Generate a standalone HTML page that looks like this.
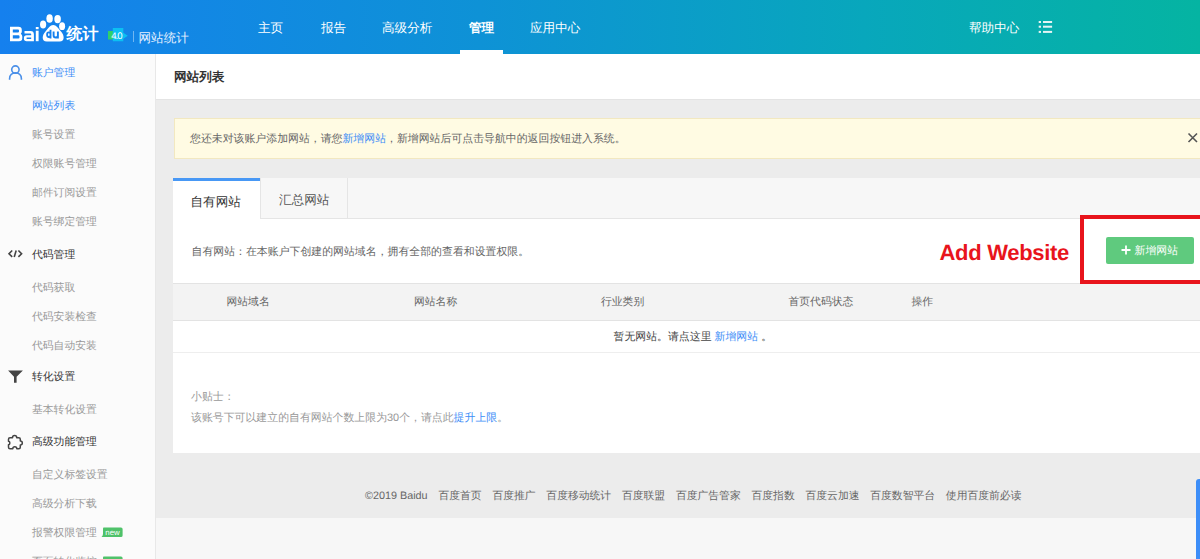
<!DOCTYPE html>
<html><head><meta charset="utf-8">
<style>
*{margin:0;padding:0;box-sizing:border-box}
html,body{width:1200px;height:559px;overflow:hidden;background:#f7f7f7}
body{font-family:"Liberation Sans",sans-serif;text-rendering:geometricPrecision;position:relative;font-size:10.9px;color:#666}
.a{position:absolute;white-space:nowrap;line-height:1}
#hd{position:absolute;left:0;top:0;width:1200px;height:54px;background:linear-gradient(to right,#1580ee 0%,#0e92d6 40%,#08a7bc 72%,#05b4a2 100%)}
.nav{position:absolute;top:22px;font-size:12.6px;color:#fff;line-height:1;white-space:nowrap}
#sb{position:absolute;left:0;top:54px;width:156px;height:505px;background:#fbfbfb;border-right:1px solid #e8e8e8}
.si{position:absolute;left:32px;font-size:10.8px;color:#999;line-height:1;white-space:nowrap}
.sh{position:absolute;left:32px;font-size:10.8px;color:#333;line-height:1;white-space:nowrap}
.ic{position:absolute}
#tt{position:absolute;left:156px;top:54px;width:1044px;height:46px;background:#fff;border-bottom:1px solid #e4e4e4}
#ct{position:absolute;left:156px;top:100px;width:1044px;height:418px;background:#ececec}
#al{position:absolute;left:174px;top:118px;width:1040px;height:41px;background:#fffbe3;border:1px solid #f2e8c0}
#pn{position:absolute;left:173px;top:178px;width:1040px;height:275px;background:#fff}
#tb{position:absolute;left:0;top:0;width:1040px;height:41px;background:#f7f7f7;border-bottom:1px solid #e5e5e5}
.lk{color:#3e8ef7}
.th{position:absolute;top:13px;font-size:10.8px;color:#666;line-height:1;white-space:nowrap}
.ft{margin-right:10.8px}
</style></head><body>
<div id="hd">
  <svg class="ic" style="left:0;top:0" width="140" height="54" viewBox="0 0 140 54">
    <g fill="#fff" fill-rule="evenodd">
      <path d="M10,26.7 H18.5 Q21.8,26.7 21.8,30 V31.5 Q21.8,33 20.8,33.8 Q22.3,34.8 22.3,36.5 V38 Q22.3,41.2 19,41.2 H10 Z M12.8,29.4 H18 Q19,29.4 19,30.4 V31.4 Q19,32.5 18,32.5 H12.8 Z M12.8,35.2 H18.4 Q19.5,35.2 19.5,36.2 V37.5 Q19.5,38.5 18.4,38.5 H12.8 Z"/>
      <path d="M24.5,31 H30.5 Q33.9,31 33.9,34.4 V41.2 H26.6 Q23.9,41.2 23.9,38.5 V38 Q23.9,35.3 26.6,35.3 H31.2 V34.4 Q31.2,33.6 30.5,33.6 H24.5 Z M26.6,37.6 H31.2 V38.9 H26.6 Z"/>
      <rect x="35.8" y="27" width="2.8" height="2.2"/>
      <rect x="35.8" y="30.7" width="2.8" height="10.5"/>
      <ellipse cx="43.1" cy="24.6" rx="3.1" ry="4"/>
      <ellipse cx="49.6" cy="18.5" rx="3.2" ry="4.3"/>
      <ellipse cx="57.6" cy="19.1" rx="3.3" ry="4.2"/>
      <ellipse cx="62.1" cy="26.2" rx="3" ry="3.9"/>
      <path d="M53.2,25.1 C50,25.1 48.5,28.2 45.5,31.5 C42,35 41.2,41.5 46.8,41.5 L59.6,41.5 C65.2,41.5 64.4,35 61,31.5 C58,28.2 56.4,25.1 53.2,25.1 Z"/>
    </g>
    <g fill="none" stroke="#1580ee" stroke-width="1.9">
      <path d="M50.5,29.8 V38.4 M50.5,34.4 C50.5,31.7 47.1,31.7 47.1,34.7 C47.1,37.7 50.5,37.7 50.5,35"/>
      <path d="M53.6,31.4 V35.6 C53.6,38.2 57.9,38.2 57.9,35.6 V31.4 M57.9,35.5 V38.4"/>
    </g>
    <rect x="108" y="31" width="5" height="8.5" fill="#2fd06a"/>
    <path d="M112.8,27.9 H123.3 V32.8 L127.8,35.8 L123.3,38.8 V41.3 H112.8 Z" fill="#0cc0f2"/>
    <text x="111.2" y="39" font-family="Liberation Sans" font-size="9.5" fill="#fff" letter-spacing="-0.9">4.0</text>
    <rect x="133" y="31" width="1" height="11" fill="rgba(255,255,255,0.4)"/>
  </svg>
  <div class="a" style="left:66.5px;top:26.5px;font-size:16px;color:#fff;font-weight:bold">统计</div>
  <div class="a" style="left:138.5px;top:32px;font-size:12.6px;color:#e6f0ff">网站统计</div>
  <div class="nav" style="left:258px">主页</div>
  <div class="nav" style="left:321px">报告</div>
  <div class="nav" style="left:382px">高级分析</div>
  <div class="nav" style="left:469px;font-weight:bold">管理</div>
  <div class="nav" style="left:530px">应用中心</div>
  <div style="position:absolute;left:460px;top:50px;width:43px;height:4px;background:#fff"></div>
  <div class="nav" style="left:969px">帮助中心</div>
  <svg class="ic" style="left:1036px;top:18px" width="20" height="18" viewBox="1036 18 20 18">
    <g fill="#e6f4f4">
      <rect x="1038.7" y="21" width="2.3" height="2"/><rect x="1043" y="21" width="9.1" height="2"/>
      <rect x="1038.7" y="25.7" width="2.3" height="2"/><rect x="1043" y="25.7" width="9.1" height="2"/>
      <rect x="1038.7" y="30.9" width="2.3" height="2"/><rect x="1043" y="30.9" width="9.1" height="2"/>
    </g>
  </svg>
</div>
<div id="sb">
  <svg class="ic" style="left:0;top:0" width="30" height="505" viewBox="0 54 30 505">
    <g fill="none" stroke="#4a8fe8" stroke-width="1.6">
      <circle cx="15.4" cy="69.6" r="3.7"/>
      <path d="M9.6,79.7 V78.5 C9.6,75 12.2,72.9 15.5,72.9 C18.8,72.9 21.4,75 21.4,78.5 V79.7"/>
    </g>
    <g fill="none" stroke="#444" stroke-width="1.6">
      <path d="M12.2,250.5 L9,253.7 L12.2,256.9"/>
      <path d="M16.2,250.6 L14.2,257"/>
      <path d="M18.4,250.5 L21.6,253.7 L18.4,256.9"/>
    </g>
    <path d="M8.1,370.6 H22.9 L16.6,376.8 V382.7 H14 V376.8 Z" fill="#444"/>
    <path d="M10,437.7 H12.5 A2.1,2.1 0 0 1 16.7,437.7 H18.8 Q20.3,437.7 20.3,439.2 V441 A2,2 0 0 1 20.3,445 V447.3 Q20.3,448.8 18.8,448.8 H16.8 A2,2 0 0 0 12.8,448.8 H10 Q8.5,448.8 8.5,447.3 V444.8 A1.8,1.8 0 0 0 8.5,441.3 V439.2 Q8.5,437.7 10,437.7 Z" fill="none" stroke="#444" stroke-width="1.5" stroke-linejoin="round"/>
  </svg>
  <div class="si" style="top:13.5px;color:#3e8ef7">账户管理</div>
  <div class="si" style="top:46.5px;color:#3e8ef7">网站列表</div>
  <div class="si" style="top:75.5px">账号设置</div>
  <div class="si" style="top:104.5px">权限账号管理</div>
  <div class="si" style="top:133.5px">邮件订阅设置</div>
  <div class="si" style="top:162.5px">账号绑定管理</div>
  <div class="sh" style="top:196px">代码管理</div>
  <div class="si" style="top:228.5px">代码获取</div>
  <div class="si" style="top:257.5px">代码安装检查</div>
  <div class="si" style="top:286.5px">代码自动安装</div>
  <div class="sh" style="top:317.5px">转化设置</div>
  <div class="si" style="top:350.5px">基本转化设置</div>
  <div class="sh" style="top:383px">高级功能管理</div>
  <div class="si" style="top:416px">自定义标签设置</div>
  <div class="si" style="top:445px">高级分析下载</div>
  <div class="si" style="top:474px">报警权限管理</div>
  <div class="si" style="top:503px">页面转化监控</div>
  <svg class="ic" style="left:100px;top:472px" width="24" height="40" viewBox="100 526 24 40">
    <path d="M103.5,527.5 H121 Q122.6,527.5 122.6,529 V535.5 Q122.6,537 121,537 H101.5 Q102.8,536 103,534 V529 Q103,527.5 103.5,527.5 Z" fill="#4fc26a"/>
    <text x="105.3" y="535" font-family="Liberation Sans" font-size="7.8" fill="#fff">new</text>
    <path d="M103.5,556.5 H121 Q122.6,556.5 122.6,558 V566 H103 V558 Q103,556.5 103.5,556.5 Z" fill="#4fc26a"/>
  </svg>
</div>
<div id="tt"><div class="a" style="left:18px;top:17px;font-size:12.6px;font-weight:bold;color:#333">网站列表</div></div>
<div id="ct"></div>
<div id="al"><div class="a" style="left:15px;top:15px">您还未对该账户添加网站，请您<span class="lk">新增网站</span>，新增网站后可点击导航中的返回按钮进入系统。</div>
  <svg class="ic" style="left:1011.5px;top:12.5px" width="12" height="12" viewBox="0 0 12 12"><path d="M1.5,1.5 L10,10 M10,1.5 L1.5,10" stroke="#555" stroke-width="1.6"/></svg>
</div>
<div id="pn">
  <div id="tb">
    <div style="position:absolute;left:0;top:0;width:87px;height:41px;background:#fff;border-top:3px solid #4898f5"></div>
    <div style="position:absolute;left:87px;top:0;width:88px;height:40px;border-right:1px solid #e5e5e5;border-left:1px solid #e5e5e5"></div>
    <div class="a" style="left:17.5px;top:17.5px;font-size:12.6px;color:#333">自有网站</div>
    <div class="a" style="left:106px;top:15.5px;font-size:12.6px;color:#555">汇总网站</div>
  </div>
  <div class="a" style="left:18.5px;top:68.5px">自有网站：在本账户下创建的网站域名，拥有全部的查看和设置权限。</div>
  <div style="position:absolute;left:0;top:105px;width:1040px;height:38px;background:#f3f3f3;border-top:1px solid #e3e3e3;border-bottom:1px solid #e3e3e3">
    <div class="th" style="left:53.5px">网站域名</div>
    <div class="th" style="left:241px">网站名称</div>
    <div class="th" style="left:428px">行业类别</div>
    <div class="th" style="left:615.5px">首页代码状态</div>
    <div class="th" style="left:738.5px">操作</div>
  </div>
  <div style="position:absolute;left:0;top:143px;width:1040px;height:32px;border-bottom:1px solid #eee">
    <div class="a" style="left:440.5px;top:10.5px;color:#444">暂无网站。请点这里 <span class="lk">新增网站</span> 。</div>
  </div>
  <div class="a" style="left:18px;top:214px;color:#999">小贴士：</div>
  <div class="a" style="left:18px;top:235px;color:#999">该账号下可以建立的自有网站个数上限为30个，请点此<span class="lk">提升上限</span>。</div>
</div>
<div class="a" style="left:365px;top:490.5px;color:#666;font-size:10.8px"><span class="ft">©2019 Baidu</span><span class="ft">百度首页</span><span class="ft">百度推广</span><span class="ft">百度移动统计</span><span class="ft">百度联盟</span><span class="ft">百度广告管家</span><span class="ft">百度指数</span><span class="ft">百度云加速</span><span class="ft">百度数智平台</span><span>使用百度前必读</span></div>
<div class="a" style="left:939.5px;top:242px;font-size:22px;font-weight:bold;color:#e8141c;letter-spacing:-0.3px">Add Website</div>
<div style="position:absolute;left:1080px;top:215px;width:140px;height:69px;border:4.5px solid #e8141c"></div>
<div style="position:absolute;left:1106px;top:237px;width:87.5px;height:27px;background:#5fca7e;border-radius:2px">
  <svg class="ic" style="left:15px;top:8px" width="10" height="10" viewBox="0 0 10 10"><path d="M5,0.5 V9.5 M0.5,5 H9.5" stroke="#fff" stroke-width="1.8"/></svg>
  <div class="a" style="left:28.5px;top:9px;color:#fff">新增网站</div>
</div>
<div style="position:absolute;left:1196px;top:479px;width:10px;height:90px;background:#3d8ef8;border-radius:3px"></div>
</body></html>
